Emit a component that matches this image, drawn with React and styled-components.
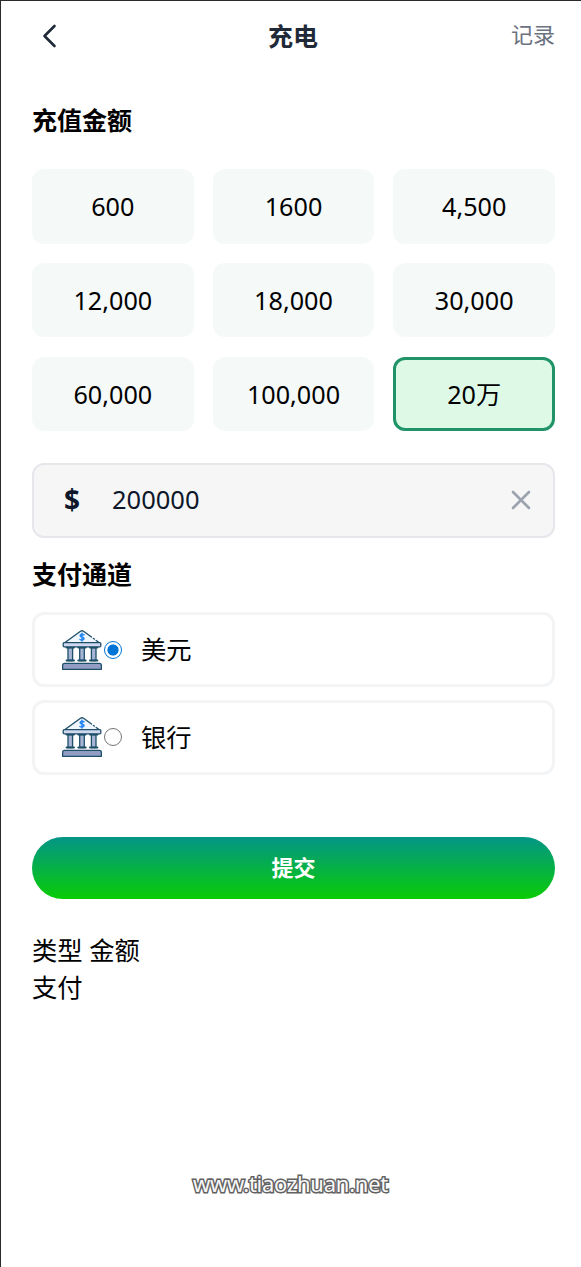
import React, { useState } from 'react';
import styled, { createGlobalStyle } from 'styled-components';

const GlobalStyle = createGlobalStyle`
  * {
    box-sizing: border-box;
  }
  body {
    margin: 0;
    background-color: #fff;
  }
  button, input {
    font: inherit;
  }
`;

const Page = styled.div`
  display: flex;
  flex-direction: column;
  width: 100%;
  height: 1267px;
  overflow: hidden;
  border-top: 1px solid #2b2b2b;
  border-left: 1px solid #2b2b2b;
  color: #000;
  font-family: 'Noto Sans', 'Noto Sans CJK SC', sans-serif;
  font-size: 25px;
  line-height: 37px;
`;

const Header = styled.header`
  display: grid;
  grid-template-columns: 1fr auto 1fr;
  align-items: center;
  height: 71px;
  padding: 0 26px 0 29px;
  color: #1f2937;
`;

const BackButton = styled.button`
  display: flex;
  justify-self: start;
  padding: 0 0 2px;
  border: none;
  background: none;
  color: inherit;
  cursor: pointer;
`;

const HeaderTitle = styled.h1`
  margin: 0;
  padding-left: 1px;
  font-size: 25px;
  font-weight: bold;
`;

const HeaderLink = styled.a`
  justify-self: end;
  padding-bottom: 4px;
  color: #6b7280;
  font-size: 22px;
  cursor: pointer;
`;

const Content = styled.main`
  display: flex;
  flex-direction: column;
  padding: 30px 26px 0 31px;
`;

const SectionTitle = styled.h2`
  margin: 0;
  font-size: 25px;
  font-weight: bold;
`;

const AmountGrid = styled.div`
  display: grid;
  grid-template-columns: repeat(3, 1fr);
  grid-auto-rows: 74.5px;
  gap: 19.4px 19px;
  margin-top: 30px;
`;

const AmountButton = styled.button`
  padding: 0;
  border: 3px solid ${props => (props.$active ? '#209368' : '#f5f9f8')};
  border-radius: 12px;
  background-color: ${props => (props.$active ? '#defae7' : '#f5f9f8')};
  color: #000;
  font-size: 25.2px;
  cursor: pointer;
`;

const AmountField = styled.label`
  display: flex;
  align-items: center;
  height: 75px;
  margin: 31.7px 0 18px;
  padding: 0 20px 1px 30px;
  border: 2px solid #e5e7eb;
  border-radius: 12px;
  background-color: #f6f6f7;
  color: #0f172a;
`;

const Currency = styled.span`
  width: 48px;
  font-size: 28px;
  font-weight: bold;
`;

const AmountInput = styled.input`
  flex: 1;
  min-width: 0;
  padding: 0;
  border: none;
  outline: none;
  background: none;
  color: inherit;
  font-size: 25.5px;
`;

const ClearButton = styled.button`
  display: flex;
  padding: 0;
  border: none;
  background: none;
  color: #9ca3af;
  cursor: pointer;
`;

const ChannelList = styled.div`
  display: flex;
  flex-direction: column;
  gap: 12.8px;
  margin-top: 19.2px;
`;

const Channel = styled.label`
  display: flex;
  align-items: center;
  height: 75px;
  padding: 0 27px;
  border: 3px solid #f3f4f6;
  border-radius: 12px;
  font-size: 25.3px;
  cursor: pointer;
`;

const Radio = styled.input`
  appearance: none;
  width: 18px;
  height: 18px;
  margin: 0 19px 0 2px;
  border: 1.5px solid ${props => (props.checked ? '#0075d8' : '#767676')};
  border-radius: 50%;
  background: ${props => (props.checked
    ? 'radial-gradient(circle, #0075d8 5.2px, #fff 5.9px)'
    : '#fff')};
`;

const SubmitButton = styled.button`
  height: 62px;
  margin: 62px 0 33px;
  padding: 0 0 1px;
  border: none;
  border-radius: 31px;
  background: linear-gradient(#039587, #08cc05);
  color: #fff;
  font-size: 22px;
  font-weight: bold;
  cursor: pointer;
`;

const Line = styled.div`
  height: 37px;
  font-size: 25.3px;
`;

const SiteMark = styled.div`
  margin-top: 159px;
  padding-right: 1px;
  color: #f8f8f8;
  font-family: 'Noto Sans', sans-serif;
  font-size: 22px;
  letter-spacing: -0.25px;
  text-align: center;
  -webkit-text-stroke: 3px #626262;
  paint-order: stroke fill;
`;

const BackIcon = () => (
  <svg width="38" height="38" viewBox="0 0 38 38" fill="none" stroke="currentColor" strokeWidth="2.6" strokeLinecap="round" strokeLinejoin="round">
    <path d="M24.5 9L14.5 19L24.5 29" />
  </svg>
);

const CloseIcon = () => (
  <svg width="24" height="24" viewBox="0 0 24 24" fill="none" stroke="currentColor" strokeWidth="2.6" strokeLinecap="round">
    <path d="M4 4L20 20M20 4L4 20" />
  </svg>
);

const BankIcon = () => (
  <svg width="40" height="40" viewBox="0 0 40 40" fill="none" stroke="#1d4f68" strokeWidth="1.3" strokeLinejoin="round" strokeLinecap="round">
    <path d="M3 12.5L18.5 1.2Q20 .3 21.5 1.2L37 12.5Z" fill="#f0f6fd" stroke="none" />
    <path d="M3 12.5L18.5 1.2Q20 .3 21.5 1.2L29.5 7M31.5 8.5L32.3 9.1M34.2 10.4L37 12.5" />
    <path d="M22 4.8C21 4 18.2 4.1 18.2 5.8C18.2 7.6 22 6.7 22 8.6C22 10.3 19 10.4 18 9.5M20 3.4V11" stroke="#2787f5" strokeWidth="1.6" />
    <path d="M6 17.5H10.6V30.5H6ZM17.7 17.5H22.3V30.5H17.7ZM29.4 17.5H34V30.5H29.4Z" fill="#a6b4d5" />
    <path d="M4.6 17.6H12M16.3 17.6H23.7M28 17.6H35.4M4.6 30.5H12M16.3 30.5H23.7M28 30.5H35.4" strokeWidth="2" />
    <rect x="1.2" y="12.6" width="37.6" height="4.2" rx="1" fill="#d0d8ef" />
    <path d="M2.5 33.4H37.5Q39.4 33.4 39.4 35.4V39.3H.6V35.4Q.6 33.4 2.5 33.4Z" fill="#929dc4" />
  </svg>
);

const amounts = [
  { label: '600', value: '600' },
  { label: '1600', value: '1600' },
  { label: '4,500', value: '4500' },
  { label: '12,000', value: '12000' },
  { label: '18,000', value: '18000' },
  { label: '30,000', value: '30000' },
  { label: '60,000', value: '60000' },
  { label: '100,000', value: '100000' },
  { label: '20万', value: '200000' },
];

const channels = ['美元', '银行'];

const App = () => {
  const [amount, setAmount] = useState('200000');
  const [channel, setChannel] = useState('美元');

  return (
    <Page>
      <GlobalStyle />
      <Header>
        <BackButton><BackIcon /></BackButton>
        <HeaderTitle>充电</HeaderTitle>
        <HeaderLink>记录</HeaderLink>
      </Header>
      <Content>
        <SectionTitle>充值金额</SectionTitle>
        <AmountGrid>
          {amounts.map(item => (
            <AmountButton key={item.value} $active={item.value === amount} onClick={() => setAmount(item.value)}>
              {item.label}
            </AmountButton>
          ))}
        </AmountGrid>
        <AmountField>
          <Currency>$</Currency>
          <AmountInput value={amount} onChange={e => setAmount(e.target.value)} />
          <ClearButton onClick={() => setAmount('')}><CloseIcon /></ClearButton>
        </AmountField>
        <SectionTitle>支付通道</SectionTitle>
        <ChannelList>
          {channels.map(name => (
            <Channel key={name}>
              <BankIcon />
              <Radio type="radio" name="channel" checked={channel === name} onChange={() => setChannel(name)} />
              {name}
            </Channel>
          ))}
        </ChannelList>
        <SubmitButton>提交</SubmitButton>
        <Line>类型 金额</Line>
        <Line>支付</Line>
      </Content>
      <SiteMark>www.tiaozhuan.net</SiteMark>
    </Page>
  );
};

export default App;
